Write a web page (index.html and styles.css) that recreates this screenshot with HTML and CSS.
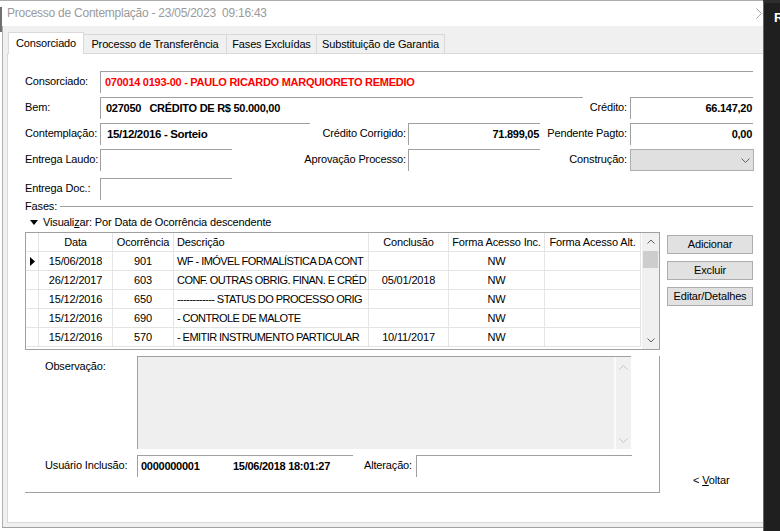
FILE: index.html
```html
<!DOCTYPE html>
<html lang="pt-BR">
<head>
<meta charset="utf-8">
<title>Processo de Contemplação</title>
<link rel="stylesheet" href="styles.css">
</head>
<body>
<div class="screen">
  <div class="window">
    <div class="behind"></div>
    <div class="titlebar">
      <span>Processo de Contemplação - 23/05/2023&nbsp; 09:16:43</span>
      <svg class="closex" width="6" height="11" viewBox="0 0 6 11"><polyline points="0.5,0.5 5.5,5.5 0.5,10.5" fill="none" stroke="#a8a8a8" stroke-width="1"/></svg>
    </div>
    <div class="frame">
      <div class="tabs">
        <div class="tab active t1">Consorciado</div>
        <div class="tab t2">Processo de Transferência</div>
        <div class="tab t3">Fases Excluídas</div>
        <div class="tab t4">Substituição de Garantia</div>
      </div>
      <div class="panel">
        <div class="row r1">
          <div class="lbl">Consorciado:</div>
          <div class="fld red w653">070014 0193-00 - PAULO RICARDO MARQUIORETO REMEDIO</div>
        </div>
        <div class="row r2">
          <div class="lbl">Bem:</div>
          <div class="fld w483 p5">027050   CRÉDITO DE R$ 50.000,00</div>
          <div class="rlbl w47">Crédito:</div>
          <div class="fld num w123">66.147,20</div>
        </div>
        <div class="row r3">
          <div class="lbl">Contemplação:</div>
          <div class="fld w210 p6 big">15/12/2016 - Sorteio</div>
          <div class="rlbl w98 pr2">Crédito Corrigido:</div>
          <div class="fld num w132">71.899,05</div>
          <div class="rlbl w90">Pendente Pagto:</div>
          <div class="fld num w123">0,00</div>
        </div>
        <div class="row r4">
          <div class="lbl">Entrega Laudo:</div>
          <div class="fld w132"></div>
          <div class="rlbl w176 pr2">Aprovação Processo:</div>
          <div class="fld w132"></div>
          <div class="rlbl w90">Construção:</div>
          <div class="combo">
            <svg width="9" height="5" viewBox="0 0 9 5"><polyline points="0.5,0.5 4.5,4.5 8.5,0.5" fill="none" stroke="#606060" stroke-width="1"/></svg>
          </div>
        </div>
        <div class="row r5">
          <div class="lbl">Entrega Doc.:</div>
          <div class="fld w132"></div>
        </div>
        <div class="fases">
          <span>Fases:</span>
          <div class="hline"></div>
        </div>
        <div class="viz">
          <svg width="8" height="5" viewBox="0 0 8 5"><polygon points="0,0 8,0 4,5" fill="#000"/></svg>
          <span>Visuali<u>z</u>ar: Por Data de Ocorrência descendente</span>
        </div>
        <div class="gridrow">
          <div class="grid">
            <div class="gt">
              <div class="gh">
                <div class="c c0"></div>
                <div class="c c1 ctr">Data</div>
                <div class="c c2 ctr">Ocorrência</div>
                <div class="c c3 hd">Descrição</div>
                <div class="c c4 ctr">Conclusão</div>
                <div class="c c5 ctr">Forma Acesso Inc.</div>
                <div class="c c6 ctr">Forma Acesso Alt.</div>
              </div>
              <div class="gr">
                <div class="c c0 ind"><svg width="5" height="9" viewBox="0 0 5 9"><polygon points="0,0 5,4.5 0,9" fill="#000"/></svg></div>
                <div class="c c1 ctr">15/06/2018</div>
                <div class="c c2 ctr">901</div>
                <div class="c c3">WF - IMÓVEL FORMALÍSTICA DA CONT</div>
                <div class="c c4 ctr"></div>
                <div class="c c5 ctr">NW</div>
                <div class="c c6"></div>
              </div>
              <div class="gr">
                <div class="c c0"></div>
                <div class="c c1 ctr">26/12/2017</div>
                <div class="c c2 ctr">603</div>
                <div class="c c3">CONF. OUTRAS OBRIG. FINAN. E CRÉD</div>
                <div class="c c4 ctr">05/01/2018</div>
                <div class="c c5 ctr">NW</div>
                <div class="c c6"></div>
              </div>
              <div class="gr">
                <div class="c c0"></div>
                <div class="c c1 ctr">15/12/2016</div>
                <div class="c c2 ctr">650</div>
                <div class="c c3">------------ STATUS DO PROCESSO ORIG</div>
                <div class="c c4 ctr"></div>
                <div class="c c5 ctr">NW</div>
                <div class="c c6"></div>
              </div>
              <div class="gr">
                <div class="c c0"></div>
                <div class="c c1 ctr">15/12/2016</div>
                <div class="c c2 ctr">690</div>
                <div class="c c3">- CONTROLE DE MALOTE</div>
                <div class="c c4 ctr"></div>
                <div class="c c5 ctr">NW</div>
                <div class="c c6"></div>
              </div>
              <div class="gr">
                <div class="c c0"></div>
                <div class="c c1 ctr">15/12/2016</div>
                <div class="c c2 ctr">570</div>
                <div class="c c3">- EMITIR INSTRUMENTO PARTICULAR</div>
                <div class="c c4 ctr">10/11/2017</div>
                <div class="c c5 ctr">NW</div>
                <div class="c c6"></div>
              </div>
            </div>
            <div class="vs">
              <div class="arr"><svg width="8" height="5" viewBox="0 0 8 5"><polyline points="0.5,4.5 4,1 7.5,4.5" fill="none" stroke="#606060" stroke-width="1"/></svg></div>
              <div class="thumb"></div>
              <div class="vsfill"></div>
              <div class="arr"><svg width="8" height="5" viewBox="0 0 8 5"><polyline points="0.5,0.5 4,4 7.5,0.5" fill="none" stroke="#606060" stroke-width="1"/></svg></div>
            </div>
          </div>
          <div class="buttons">
            <div class="btn">Adicionar</div>
            <div class="btn">Excluir</div>
            <div class="btn">Editar/Detalhes</div>
          </div>
        </div>
        <div class="bottom">
          <div class="obs">
            <div class="obsrow">
              <div class="olbl">Observação:</div>
              <div class="ta">
                <div class="tafill"></div>
                <div class="tas">
                  <svg width="9" height="5" viewBox="0 0 9 5"><polyline points="0.5,4.5 4.5,0.5 8.5,4.5" fill="none" stroke="#c4c4c4" stroke-width="1"/></svg>
                  <svg width="9" height="5" viewBox="0 0 9 5"><polyline points="0.5,0.5 4.5,4.5 8.5,0.5" fill="none" stroke="#c4c4c4" stroke-width="1"/></svg>
                </div>
              </div>
            </div>
            <div class="userrow">
              <div class="olbl ul">Usuário Inclusão:</div>
              <div class="fld w216 p3"><span class="uid">0000000001</span><span>15/06/2018 18:01:27</span></div>
              <div class="rlbl w63 pr4">Alteração:</div>
              <div class="fld w216"></div>
            </div>
          </div>
          <div class="voltar">&lt; <u>V</u>oltar</div>
        </div>
      </div>
    </div>
  </div>
  <div class="side"><span>R</span></div>
</div>
</body>
</html>
```
FILE: styles.css
```css
* { box-sizing: border-box; margin: 0; padding: 0; }
body {
  margin: 0;
  width: 780px;
  height: 531px;
  overflow: hidden;
  background: #fff;
  font-family: "Liberation Sans", Arial, sans-serif;
  font-size: 11px;
  letter-spacing: -0.15px;
  color: #000;
}
.screen { display: flex; width: 780px; height: 531px; }
.window {
  width: 763px;
  height: 531px;
  position: relative;
  background: #fff;
  display: flex;
  flex-direction: column;
}
.behind {
  position: absolute;
  left: 0;
  top: 7px;
  width: 2px;
  height: 25px;
  background: #707070;
}
.titlebar {
  height: 26px;
  flex: none;
  border-top: 1px solid #acacac;
  padding-left: 7px;
  padding-right: 1px;
  font-family: "Liberation Sans", Arial, sans-serif;
  font-size: 12px;
  letter-spacing: -0.25px;
  color: #9a9a9a;
  line-height: 24px;
  display: flex;
  justify-content: space-between;
  white-space: pre;
}
.closex { margin-top: 7px; }
.frame {
  margin-left: 2px;
  width: 761px;
  height: 502px;
  flex: none;
  background: #f0f0f0;
  border-left: 1px solid #b0b0b0;
  border-bottom: 1px solid #a0a0a0;
  display: flex;
  flex-direction: column;
}
.tabs {
  height: 27px;
  flex: none;
  display: flex;
  align-items: flex-end;
  padding-left: 5px;
}
.tab {
  height: 19px;
  border: 1px solid #d9d9d9;
  border-bottom: none;
  line-height: 18px;
  text-align: center;
  margin-left: -1px;
  background: #f0f0f0;
  white-space: nowrap;
}
.tab.active {
  height: 22px;
  margin-bottom: -1px;
  margin-left: 0;
  background: #fff;
  line-height: 21px;
  position: relative;
  z-index: 1;
}
.t1 { width: 76px; }
.t2 { width: 144px; }
.t3 { width: 91px; }
.t4 { width: 129px; }
.panel {
  margin-left: 4px;
  width: 756px;
  height: 470px;
  flex: none;
  background: #fff;
  border: 1px solid #d9d9d9;
  border-right: none;
  padding-left: 17px;
  display: flex;
  flex-direction: column;
}
.row { display: flex; height: 22px; flex: none; }
.r1 { margin-top: 17px; }
.r2, .r3, .r4 { margin-top: 4px; }
.r5 { margin-top: 7px; }
.lbl { width: 75px; flex: none; line-height: 21px; white-space: nowrap; }
.fld {
  height: 22px;
  flex: none;
  border-top: 1px solid #a0a0a0;
  border-left: 1px solid #a0a0a0;
  line-height: 20px;
  padding-left: 4px;
  white-space: pre;
  font-weight: bold;
  letter-spacing: -0.27px;
  overflow: hidden;
}
.big { font-size: 11.5px; letter-spacing: -0.35px; }
.red { color: #f00; }
.p5 { padding-left: 5px; }
.p6 { padding-left: 6px; }
.p3 { padding-left: 3px; }
.num { text-align: right; padding-left: 0; padding-right: 1px; }
.rlbl {
  flex: none;
  text-align: right;
  line-height: 21px;
  padding-right: 3px;
  white-space: nowrap;
}
.pr2 { padding-right: 2px; }
.pr4 { padding-right: 4px; }
.w653 { width: 653px; }
.w483 { width: 483px; }
.w47 { width: 47px; }
.w123 { width: 123px; }
.w210 { width: 210px; }
.w98 { width: 98px; }
.w132 { width: 132px; }
.w90 { width: 90px; }
.w176 { width: 176px; }
.w216 { width: 216px; }
.w63 { width: 63px; }
.combo {
  width: 124px;
  height: 22px;
  flex: none;
  border: 1px solid #adadad;
  background: #e0e0e0;
  display: flex;
  justify-content: flex-end;
  align-items: center;
  padding-right: 3px;
}
.fases {
  display: flex;
  align-items: center;
  height: 13px;
  line-height: 13px;
  flex: none;
}
.hline {
  flex: 1;
  height: 1px;
  background: #a0a0a0;
  margin-left: 3px;
  margin-right: 10px;
}
.viz {
  margin-top: 3px;
  height: 13px;
  line-height: 13px;
  flex: none;
  display: flex;
  align-items: center;
  padding-left: 5px;
  gap: 5px;
}
.gridrow { display: flex; margin-top: 3px; flex: none; }
.grid {
  width: 635px;
  height: 118px;
  border: 1px solid #a0a0a0;
  display: flex;
  flex: none;
}
.gt { width: 615px; flex: none; }
.gh, .gr {
  display: flex;
  height: 19px;
  border-bottom: 1px solid #e4e4e4;
}
.c {
  flex: none;
  border-right: 1px solid #e4e4e4;
  line-height: 18px;
  white-space: nowrap;
  overflow: hidden;
  padding-left: 3px;
}
.ctr { text-align: center; padding-left: 0; }
.c0 { width: 13px; padding-left: 0; }
.c1 { width: 74px; }
.c2 { width: 61px; }
.c3 { width: 195px; letter-spacing: -0.55px; }
.c3.hd { letter-spacing: -0.15px; }
.c4 { width: 80px; }
.c5 { width: 96px; }
.c6 { width: 96px; }
.ind { display: flex; align-items: center; padding-left: 4px; }
.vs {
  width: 17px;
  margin-left: 1px;
  background: #f0f0f0;
  display: flex;
  flex-direction: column;
}
.arr {
  height: 17px;
  flex: none;
  display: flex;
  align-items: center;
  justify-content: center;
}
.thumb {
  height: 17px;
  flex: none;
  margin: 1px 1px 0;
  background: #cdcdcd;
}
.vsfill { flex: 1; }
.buttons {
  margin-left: 7px;
  margin-top: 3px;
  display: flex;
  flex-direction: column;
  gap: 7px;
}
.btn {
  width: 86px;
  height: 19px;
  background: #e1e1e1;
  border: 1px solid #adadad;
  text-align: center;
  line-height: 17px;
}
.bottom { display: flex; margin-top: 6px; flex: none; }
.obs {
  width: 635px;
  flex: none;
  border-right: 1px solid #a0a0a0;
  border-bottom: 1px solid #a0a0a0;
  padding: 0 0 15px 20px;
}
.obsrow { display: flex; }
.olbl { width: 92px; flex: none; line-height: 20px; white-space: nowrap; }
.ul { line-height: 21px; }
.ta {
  width: 494px;
  height: 93px;
  border-top: 1px solid #a0a0a0;
  border-left: 1px solid #a0a0a0;
  background: #efefef;
  display: flex;
}
.tafill { flex: 1; }
.tas {
  width: 17px;
  border-left: 2px solid #fafafa;
  background: #f0f0f0;
  display: flex;
  flex-direction: column;
  justify-content: space-between;
  align-items: center;
  padding: 8px 0 6px;
}
.userrow { display: flex; margin-top: 6px; }
.uid { display: inline-block; width: 92px; }
.voltar {
  margin-left: 33px;
  align-self: flex-end;
  margin-bottom: 6px;
  line-height: 13px;
  white-space: nowrap;
}
.side {
  width: 17px;
  height: 531px;
  background: #1f1f1f;
  border-left: 1px solid #2b74c8;
  border-top: 3px solid #2e2e2e;
  padding-left: 10px;
  padding-top: 7px;
  overflow: hidden;
  color: #fff;
  font-weight: bold;
  font-size: 13px;
  letter-spacing: 0;
  line-height: 16px;
  white-space: nowrap;
}
```
